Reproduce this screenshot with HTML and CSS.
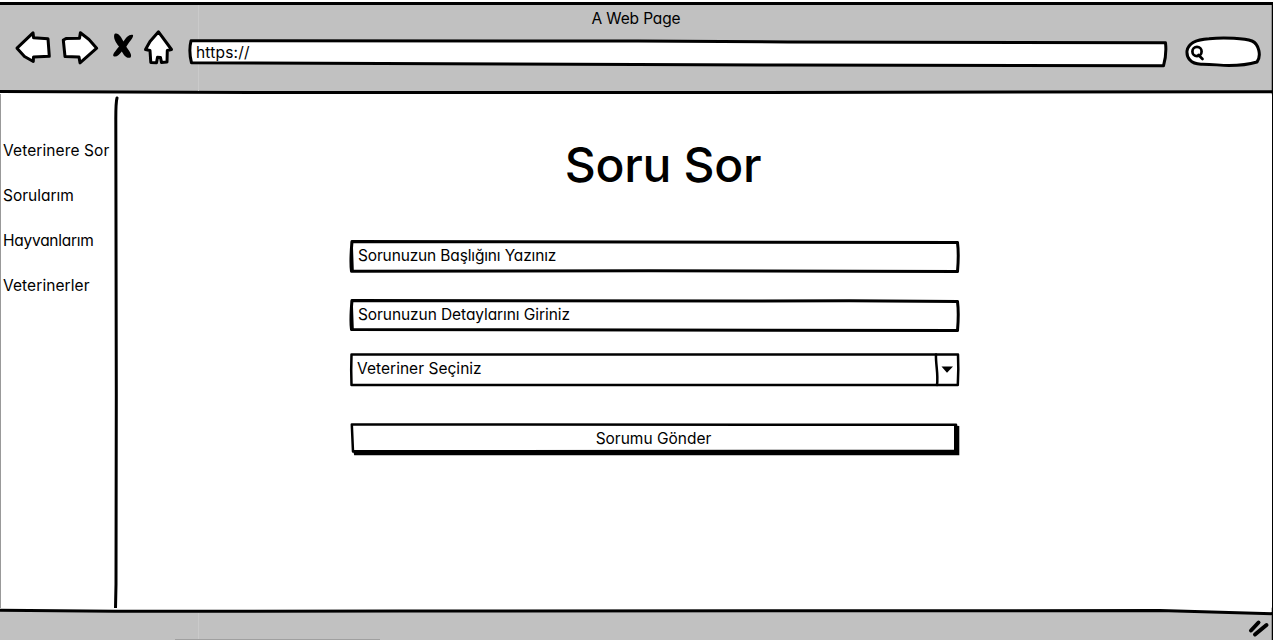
FILE: index.html
```html
<!DOCTYPE html>
<html lang="tr">
<head>
<meta charset="utf-8">
<title>A Web Page</title>
<link rel="stylesheet" href="styles.css">
</head>
<body>
<div class="window">
  <header class="chrome">
    <svg class="frame" viewBox="0 0 1273 94">
      <path d="M0 3.5H1273" class="ink"/>
      <path d="M0 91.500L250 92.500L700 92.500L1273 91.800" class="ink"/>
      <path d="M1272.500 3V94" class="ink thin"/>
      <path d="M198.500 5V91" class="seam"/>
    </svg>
    <div class="bar">
      <p class="title">A Web Page</p>
      <div class="tools">
        <svg class="icons" viewBox="0 0 180 40">
          <path class="shape" d="M17 20.200L33 4.800L33.600 9.800L48 10.800L49.300 28.300L33.500 29L33.300 33.500L24.500 28.500Z"/>
          <path class="shape" d="M63.300 12L66 10.600L79.500 10.200L80.400 4.800L89 11.500L96.700 20.200L80 34.800L79 29L65 28.500Z"/>
          <path class="solid" d="M114.500 6C118.500 4 121.500 10 123.500 13.500C126 9.500 129.500 5.800 133 7C134 9.500 128.500 14.500 126.300 18.800C129.500 23.500 132.500 27 130.500 29.500C126.500 31.200 123.500 26.500 121.800 23.500C119.500 26.500 116 30 113.300 28C112.500 25.500 116.500 22 119 18.500C115.500 14.500 113 9.500 114.500 6Z"/>
          <path class="shape" d="M158.500 3.800L171.500 21.500L167.300 22.500L167 34L161.500 34.500L160.500 29.500L157.500 29.300L156.500 34.700L150.800 34.500L150 22.500L145.500 21.500L150 13.500Z"/>
        </svg>
        <div class="address">
          <svg class="frame" viewBox="0 0 979 30">
            <path class="shape" d="M3 2.800L450 3L600 4L977.500 4.800Q978.800 16 975.500 27.800L600 27L3.500 24.800Q.500 13 3 2.800Z"/>
          </svg>
          <span class="url">https://</span>
        </div>
        <svg class="search" viewBox="0 0 76 32">
          <path class="shape" d="M16 28.200C5 28 1.500 21 2 15C3 8 11 3.500 24 2.700C40 1 60 2.500 67 5C74 8 76.500 20 72 26C62 29 53 29.500 44 29.500C34 29.500 28 28 16 28.200Z"/>
          <circle class="shape lens" cx="12" cy="15.500" r="4.600"/>
          <path class="ink lens" d="M13.500 19L17.500 23"/>
        </svg>
      </div>
    </div>
  </header>

  <div class="body">
    <nav class="side">
      <a class="n1">Veterinere Sor</a>
      <a class="n2">Sorularım</a>
      <a class="n3">Hayvanlarım</a>
      <a class="n4">Veterinerler</a>
    </nav>
    <svg class="divider" viewBox="0 0 6 514"><path class="ink" d="M3 4Q1.800 8 1.800 25L2.300 300L2 490L1.500 514"/></svg>
    <main class="content">
      <h1>Soru Sor</h1>
      <div class="field first">
        <svg class="frame" viewBox="0 0 612 34">
          <path class="ink" d="M3 2.500L608.500 3.500Q610 15 608.500 32.500L300 31.700L2.500 32.200Q1.200 22 3 2.500Z"/>
          <path class="ink fine" d="M2.800 3L3.800 31"/>
        </svg>
        <span class="f1">Sorunuzun Başlığını Yazınız</span>
      </div>
      <div class="field second">
        <svg class="frame" viewBox="0 0 612 34">
          <path class="ink" d="M3 2.500L400 3L500 2.800L608.500 3.500Q610 15 608.500 32.500L300 32L2.500 31.500Q1.200 22 3 2.500Z"/>
          <path class="ink fine" d="M2.800 3L3.800 31"/>
        </svg>
        <span class="f2">Sorunuzun Detaylarını Giriniz</span>
      </div>
      <div class="field third">
        <svg class="frame" viewBox="0 0 612 34">
          <path class="ink slim" d="M2.500 2.500L609 2.500L609.300 17L608.800 33L2.500 33L2.200 18Z"/>
          <path class="ink slim" d="M587 2.500C586.500 12 589.500 22 588 33"/>
          <path class="solid" d="M592.500 14.500H604L598 20.700Z"/>
        </svg>
        <span class="f3">Veteriner Seçiniz</span>
      </div>
      <div class="field send">
        <svg class="frame" viewBox="0 0 612 34">
          <path class="solid" d="M4 28H605V3.500L610.300 4V33.300H5.200Z"/>
          <path class="ink slim" d="M2.800 2.500L607 2.800V28.700L4 29.500Z"/>
        </svg>
        <span class="f4">Sorumu Gönder</span>
      </div>
    </main>
  </div>

  <footer class="status">
    <svg class="frame" viewBox="0 0 1273 32">
      <path class="base" d="M0 3L1160 3L1273 5.500V32H0Z"/>
      <path class="ink" d="M0 2.300L115 3.300L400 3L1160 2.600L1273 5.700"/>
      <path class="ink thin" d="M1272.500 0V32"/>
      <path class="seam" d="M198.500 5V31"/>
      <path class="edge" d="M175 31.700H380"/>
      <path class="grip" d="M1251 22.500L1258.500 14.500M1255 26.500L1266.500 17"/>
    </svg>
  </footer>
</div>
</body>
</html>
```
FILE: styles.css
```css
* { box-sizing: border-box; }
body {
  margin: 0;
  background: #fff;
  color: #000;
  font: 15.5px/20px Inter, "Noto Sans", sans-serif;
  font-feature-settings: "cv11", "ss03";
}
.window {
  display: grid;
  grid-template-rows: 94px 514px 32px;
  height: 640px;
  overflow: hidden;
}
.chrome, .status, .address, .field { display: grid; }
.chrome > *, .status > *, .address > *, .field > * { grid-area: 1 / 1; }
.frame { width: 100%; height: 100%; display: block; overflow: visible; }
.chrome { background: linear-gradient(#fff 2px, #c1c1c1 2px, #c1c1c1 92px, #fff 92px); }
.ink { fill: none; stroke: #000; stroke-width: 3; stroke-linejoin: round; stroke-linecap: round; }
.thin { stroke-width: 1.5; }
.fine { stroke-width: 2; }
.slim { stroke-width: 2.5; }
.shape { fill: #fff; stroke: #000; stroke-width: 3; stroke-linejoin: round; }
.lens { stroke-width: 2.7; }
.solid { fill: #000; }
.base { fill: #c1c1c1; }
.seam { stroke: #cacaca; stroke-width: 1; }
.edge { stroke: #999; stroke-width: 1; }
.grip { fill: none; stroke: #000; stroke-width: 4; stroke-linecap: round; }
.bar { padding-top: 9px; }
.title { margin: 0; padding-right: 1px; text-align: center; letter-spacing: -0.15px; }
.tools { display: flex; align-items: flex-start; margin-top: -1px; }
.icons { width: 180px; height: 40px; flex: none; }
.address { width: 979px; height: 30px; margin: 10px 0 0 8px; flex: none; }
.url { z-index: 1; padding: 5px 0 0 8px; letter-spacing: 0.2px; }
.search { width: 76px; height: 32px; margin: 8px 0 0 18px; flex: none; }
.body { display: grid; grid-template-columns: 113px 6px 1fr; border-left: 1px solid #999; border-right: 1px solid #000; }
.side { display: flex; flex-direction: column; gap: 25px; padding: 47px 0 0 2px; white-space: nowrap; }
.n1 { letter-spacing: 0.1px; }
.n3 { letter-spacing: -0.25px; }
.n4 { letter-spacing: 0.08px; }
.divider { width: 6px; height: 514px; }
.content { display: flex; flex-direction: column; align-items: flex-start; padding: 40px 0 0 229px; }
h1 { width: 612px; margin: 0 0 43px 8px; text-align: center; font-size: 48px; line-height: 62px; font-weight: 500; letter-spacing: -0.3px; }
.field { width: 612px; height: 34px; }
.field span { z-index: 1; padding: 7px 0 0 9px; }
.second { margin-top: 25px; }
.third { margin-top: 20px; }
.send { margin-top: 36px; }
.field .f1 { letter-spacing: -0.15px; }
.field .f2 { letter-spacing: -0.08px; }
.field .f3 { padding-left: 8px; letter-spacing: 0.03px; }
.field .f4 { padding: 7px 3px 0 0; text-align: center; }
```
